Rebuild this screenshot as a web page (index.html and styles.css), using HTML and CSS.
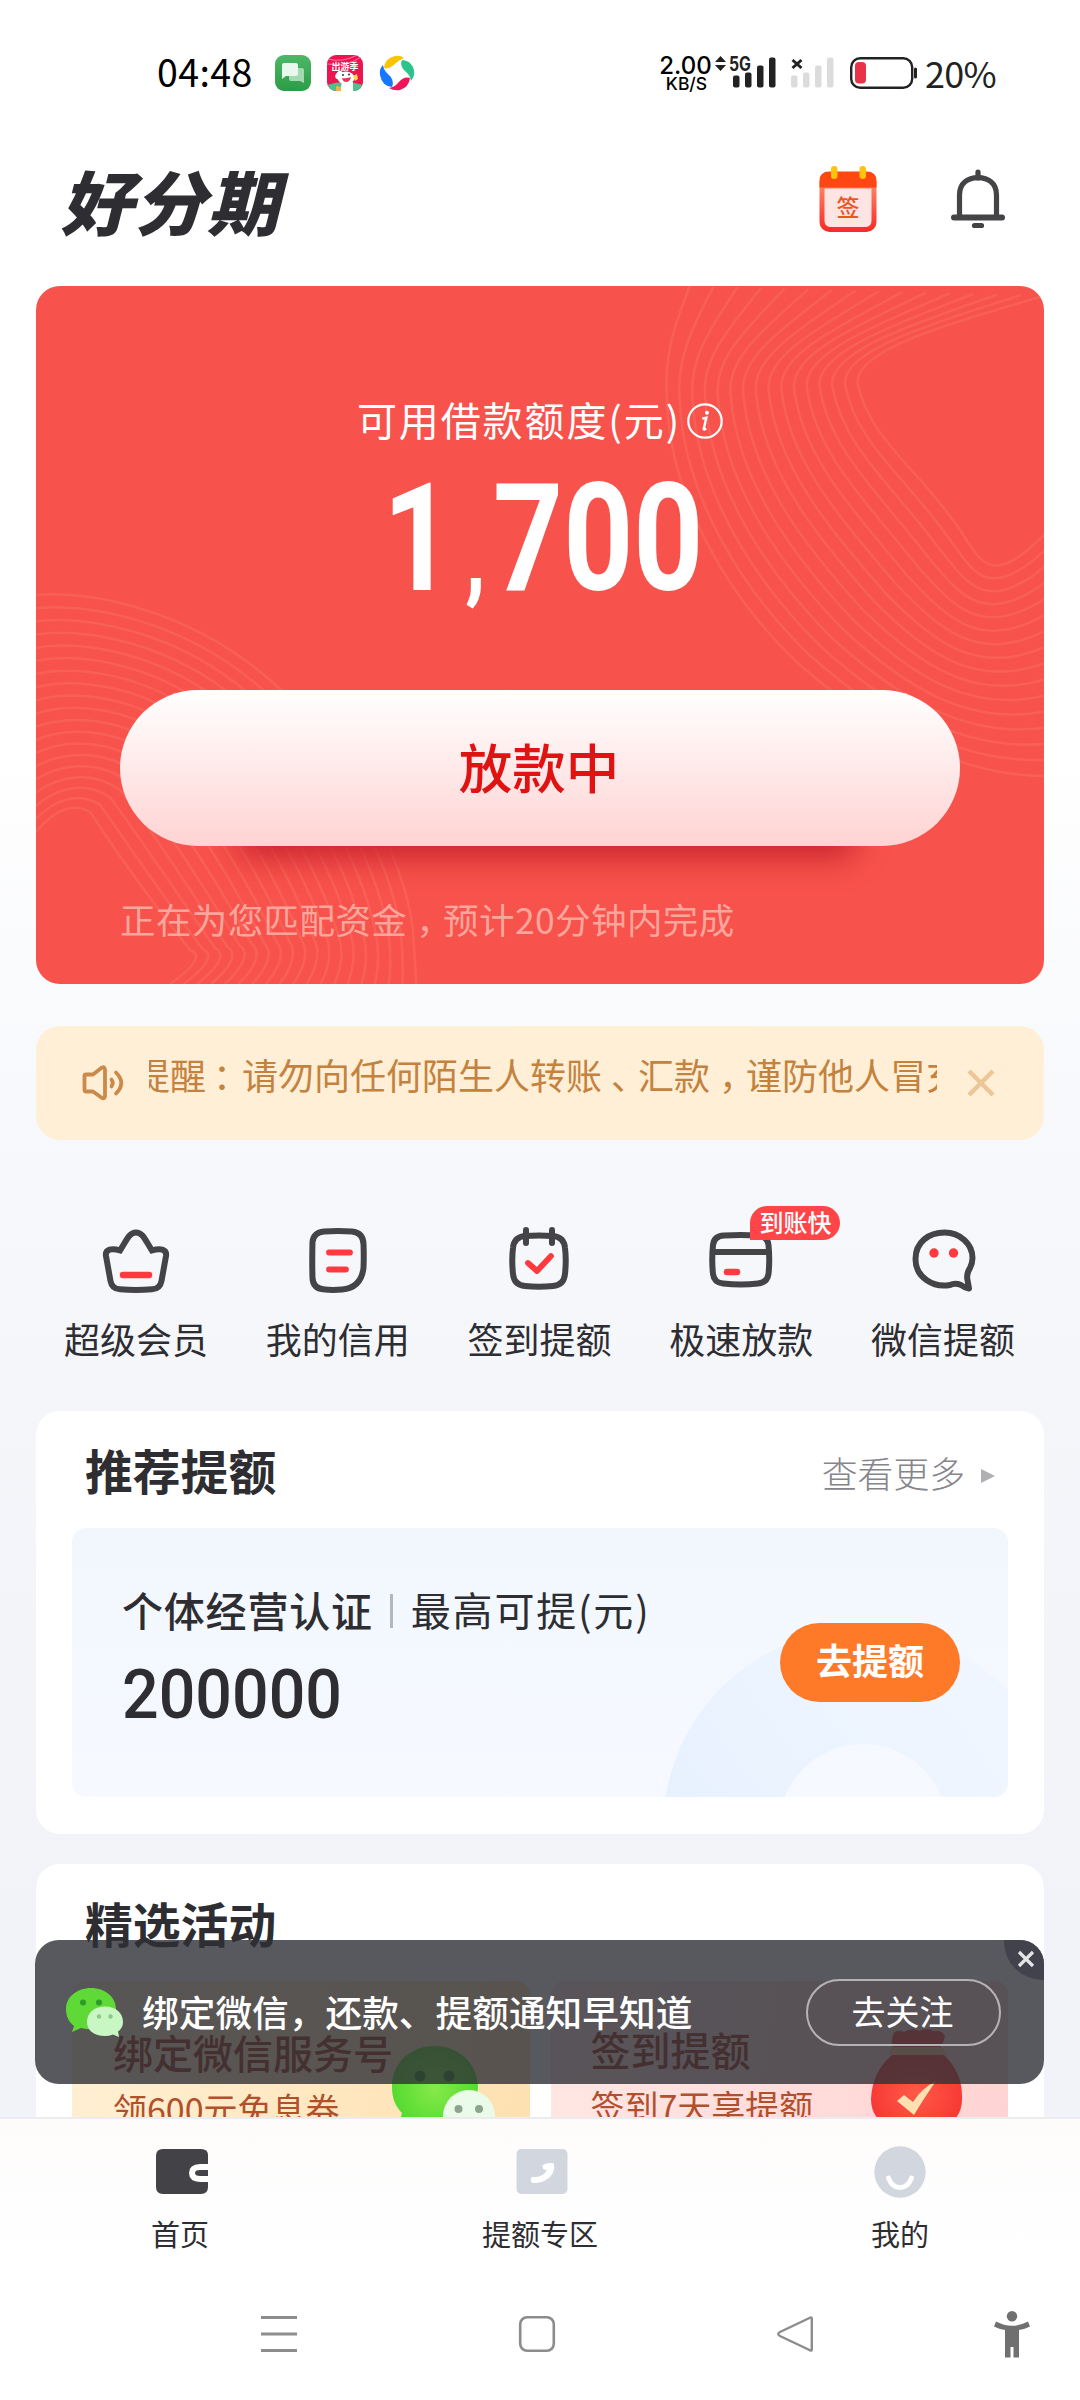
FILE: index.html
```html
<!DOCTYPE html>
<html lang="zh-CN">
<head>
<meta charset="utf-8">
<title>好分期</title>
<link rel="stylesheet" href="styles.css">
</head>
<body>
<div class="screen">
  <main class="content">
    <div class="status">
      <span class="time">04:48</span>
      <svg class="app-ic" viewBox="0 0 36 36"><defs><linearGradient id="gm" x1="0" y1="0" x2="0" y2="1"><stop offset="0" stop-color="#4db868"/><stop offset="1" stop-color="#2b9c46"/></linearGradient></defs><rect width="36" height="36" rx="9" fill="url(#gm)"/><path d="M14 13h13q2 0 2 2v13l-4-2H16q-2 0-2-2z" fill="#a5d9b1"/><path d="M9 8h12q2 0 2 2v9q0 2-2 2H11l-4 3V10q0-2 2-2z" fill="#e8f8ec"/></svg>
      <svg class="app-ic" viewBox="0 0 36 36"><defs><clipPath id="ac"><rect width="36" height="36" rx="9"/></clipPath></defs><g clip-path="url(#ac)"><rect width="36" height="36" fill="#ee1450"/><path d="M0 4Q16 8 30 0M0 9Q20 12 34 2" stroke="#ff7aa0" fill="none"/><path d="M0 30Q18 24 36 30V36H0z" fill="#4fc08a"/><path d="M15 27h11v9H13z" fill="#fff"/><path d="M9 31l5 1v4H9z" fill="#f7b23a"/><ellipse cx="19" cy="23" rx="8.500" ry="6.500" fill="#fff"/><ellipse cx="12" cy="20" rx="3" ry="4.500" fill="#fff" transform="rotate(40 12 20)"/><path d="M15 23q4 1 9-1q-1 5-5 5q-3 0-4-4z" fill="#e8384f"/><circle cx="16" cy="20" r="1" fill="#333"/><circle cx="22" cy="19.500" r="1" fill="#333"/><path d="M26 21l4-2 1 5-3 2z" fill="#ffd84a"/></g><text x="18" y="14.500" text-anchor="middle" class="app-txt">出游季</text></svg>
      <svg class="app-ic" viewBox="0 0 36 36"><path d="M5 13Q6 3 16 1Q21 0 25 3Q20 5 17 8Q10 15 5 13z" fill="#fbc400"/><path d="M23 5Q32 5 35 15Q36 21 32 26Q31 20 27 17Q20 11 23 5z" fill="#2bc48e"/><path d="M31 23Q30 32 21 35Q15 36 10 33Q16 32 19 28Q25 21 31 23z" fill="#f0145a"/><path d="M13 32Q3 31 1 20Q0 14 4 10Q5 16 9 19Q16 25 13 32z" fill="#1677ff"/></svg>
      <div class="speed"><b>2.00</b><span>KB/S</span></div>
      <svg class="signal" viewBox="0 0 130 34" fill="#222"><path d="M7.500 0l5.500 6H2zM7.500 15l5.500-6H2z"/><text x="16" y="14.500" class="sig-txt" textLength="22" lengthAdjust="spacingAndGlyphs">5G</text><rect x="20" y="19.500" width="6.500" height="12" rx="2"/><rect x="32" y="16.500" width="6.500" height="15" rx="2"/><rect x="44" y="9.500" width="6.500" height="22" rx="2"/><rect x="56" y="1.500" width="6.500" height="30" rx="2"/><path d="M79.500 4l9 8M88.500 4l-9 8" stroke="#222" stroke-width="3"/><g fill="#dcdcdc"><rect x="78" y="19.500" width="6.500" height="12" rx="2"/><rect x="90" y="16.500" width="6.500" height="15" rx="2"/><rect x="102" y="9.500" width="6.500" height="22" rx="2"/><rect x="114" y="1.500" width="6.500" height="30" rx="2"/></g></svg>
      <svg class="battery" viewBox="0 0 68 32"><rect x="1.200" y="1.200" width="61" height="29.500" rx="9" fill="#fff" stroke="#222" stroke-width="2.400"/><rect x="5" y="5" width="11" height="21.500" rx="4" fill="#e93147"/><rect x="64" y="10.500" width="3" height="11" rx="1.500" fill="#222"/></svg>
      <span class="pct">20%</span>
    </div>

    <header class="top">
      <h1 class="logo">好分期</h1>
      <svg class="sign" viewBox="0 0 58 66"><defs><linearGradient id="sg" x1="0" y1="0" x2="0" y2="1"><stop offset="0" stop-color="#ff9d77"/><stop offset="1" stop-color="#f82a24"/></linearGradient></defs><rect x="0.500" y="6" width="57" height="60" rx="10" fill="url(#sg)"/><path d="M.5 21.500V15q0-9.500 10-9.500h37q10 0 10 9.500v6.500z" fill="#ff4713"/><path d="M5.500 22.500h47v32q0 6.500-6 6.500h-35q-6 0-6-6.500z" fill="#ffe4e4"/><rect x="12" y="0" width="6.500" height="13" rx="3.200" fill="#ffc20e"/><rect x="40.500" y="0" width="6.500" height="13" rx="3.200" fill="#ffc20e"/><text x="29" y="49.500" text-anchor="middle" class="sign-txt">签</text></svg>
      <svg class="bell" viewBox="0 0 54 60" fill="none" stroke="#444447"><path d="M8.500 48V26C8.500 14 17 8.700 27 8.700S45.500 14 45.500 26V48" stroke-width="5.200"/><path d="M3 48.500H51" stroke-width="6" stroke-linecap="round"/><path d="M27 3V9M23.500 56.500h7" stroke-width="5.200" stroke-linecap="round"/></svg>
    </header>

    <section class="hero">
      <svg class="waves" viewBox="36 286 1008 698" id="waves"></svg>
      <div class="hero-title"><span>可用借款额度(元)</span><svg viewBox="0 0 36 36" fill="none" stroke="#fff"><circle cx="18" cy="18" r="16.700" stroke-width="2.200"/><circle cx="20" cy="9.700" r="2" fill="#fff" stroke="none"/><path d="M15.300 15.500l4-.7-2.600 11.400q0 1 2.600-.8" stroke-width="2.400"/></svg></div>
      <div class="amount"><span class="amount-in">1<i>,</i>700</span></div>
      <div class="cta">放款中</div>
      <p class="hint">正在为您匹配资金<i class="mid">，</i>预计20分钟内完成</p>
    </section>

    <section class="notice">
      <svg class="horn" viewBox="0 0 42 36" fill="none" stroke="#c98a4a" stroke-width="3.800" stroke-linecap="round" stroke-linejoin="round"><path d="M2.500 11Q2.500 9.500 4 9.500H11L20 2.500Q23 1.500 23 5V31Q23 34 20 33L11 26.500H4Q2.500 26.500 2.500 25z"/><path d="M29.500 14.500q2.500 3.500 0 7M34 7.500q10.500 10.500 0 21"/></svg>
      <div class="marquee"><div class="marquee-in">提醒<i class="mid2">：</i>请勿向任何陌生人转账<i class="mid">、</i>汇款<i class="mid">，</i>谨防他人冒充</div></div>
      <svg class="nx" viewBox="0 0 28 28"><path d="M2 2L26 26M26 2L2 26" stroke="#edc698" stroke-width="4.500"/></svg>
    </section>

    <nav class="quick">
      <div class="q"><svg viewBox="0 0 72 72" fill="none" stroke="#444447" stroke-width="6" stroke-linejoin="miter"><path d="M20 26.500C27 16 29 8.500 36 8.500S45 16 52 26.500C60 24 67 25 66 32L61.500 57Q60 65 52 65.300Q36 66.500 20 65.300Q12 65 10.500 57L6 32C5 25 12 24 20 26.500z"/><path d="M23 51H49" stroke="#ff3a3e" stroke-width="6.500" stroke-linecap="round"/></svg><span>超级会员</span></div>
      <div class="q"><svg viewBox="0 0 72 72" fill="none" stroke="#444447" stroke-width="6"><path d="M22 7.500Q36 6.500 50 7.500Q61 8.500 61.500 20Q62 32 61.500 44Q59 64 40 65.500Q30 66.500 21 65.300Q11 64 10.500 54Q10 36 10.500 18Q11.500 8.500 22 7.500z"/><path d="M27 28.500H48M27 45.500H44" stroke="#ff3a3e" stroke-width="5.800" stroke-linecap="round"/></svg><span>我的信用</span></div>
      <div class="q"><svg viewBox="0 0 72 72" fill="none" stroke="#444447" stroke-width="6" stroke-linecap="round"><path d="M22 12Q36 11 50 12Q61 13 62 24Q63.500 36 62 50Q61 61 50 62Q36 63.500 22 62Q11 61 10 50Q8.500 36 10 24Q11 13 22 12z"/><path d="M23 6V19M49 6V19"/><path d="M25 39L34 47L48 32" stroke="#ff3a3e" stroke-width="5.800" stroke-linejoin="round"/></svg><span>签到提额</span></div>
      <div class="q"><svg viewBox="0 0 72 72" fill="none" stroke="#444447" stroke-width="6"><path d="M19 11.500Q36 10.500 52 11.500Q62.500 12 63.500 21Q65 36 63.500 50Q62.500 58.500 53 59.500Q36 61.500 18 59.500Q9 58.500 8 50Q6.500 36 8 21Q9 12 19 11.500zM8 28H64"/><path d="M22 48H32" stroke="#ff3a3e" stroke-width="6.500" stroke-linecap="round"/></svg><span>极速放款</span><em>到账快</em></div>
      <div class="q"><svg class="bubble" viewBox="0 0 72 72" fill="none" stroke="#444447" stroke-width="6" stroke-linejoin="round"><path d="M61 64.500Q56 63.500 53 61Q47 58.500 42 61C26 64 7.500 54 7.500 35C7.500 18 21 8.500 36.500 8.500S64.500 20 64.500 34Q64.500 39 62 44Q58 50 59.500 56z"/><circle cx="26" cy="29" r="4.700" fill="#ff3a3e" stroke="none"/><circle cx="45.500" cy="29" r="4.700" fill="#ff3a3e" stroke="none"/></svg><span>微信提额</span></div>
    </nav>

    <section class="card rec">
      <div class="card-head"><h2>推荐提额</h2><span class="more">查看更多<svg viewBox="0 0 14 16"><path d="M0 1L14 8L0 15z" fill="#b0b0b4"/></svg></span></div>
      <div class="offer">
        <svg class="ring" viewBox="0 0 936 269"><defs><linearGradient id="rg" x1="0" y1="1" x2="1" y2="0.300"><stop offset="0" stop-color="#e6f0fe"/><stop offset="1" stop-color="#eff6ff"/></linearGradient></defs><circle cx="791" cy="301" r="142.500" fill="none" stroke="url(#rg)" stroke-width="115"/></svg>
        <div class="offer-info">
          <div class="offer-line"><b>个体经营认证</b><i></i><span>最高可提(元)</span></div>
          <div class="offer-num"><span>200000</span></div>
        </div>
        <div class="offer-btn">去提额</div>
      </div>
    </section>

    <section class="card acts">
      <div class="card-head"><h2>精选活动</h2></div>
      <div class="promos">
        <div class="promo p1"><h3>绑定微信服务号</h3><p>领600元免息券</p>
          <svg viewBox="0 0 110 100"><defs><radialGradient id="wg"><stop offset="0" stop-color="#86ea4a"/><stop offset="1" stop-color="#55da30"/></radialGradient></defs><path d="M46 5C20 5 3 23 3 46C3 58 7 66 13 72L8 90L28 81Q60 88 78 70Q89 60 89 46C89 23 70 5 46 5z" fill="url(#wg)"/><circle cx="31" cy="35" r="5.500" fill="#2f8c28"/><circle cx="60" cy="35" r="5.500" fill="#2f8c28"/><circle cx="80" cy="75" r="26" fill="#ebfbe9"/><circle cx="69.500" cy="68" r="4" fill="#8da58d"/><circle cx="90" cy="68" r="4" fill="#8da58d"/></svg></div>
        <div class="promo p2"><h3>签到提额</h3><p>签到7天享提额</p>
          <svg viewBox="0 0 110 100"><defs><radialGradient id="bg"><stop offset="0" stop-color="#ff5a48"/><stop offset="1" stop-color="#f73a35"/></radialGradient></defs><path d="M27 10Q24 2 28 -5Q32 -9 38 -6Q46 -11 53 -7Q62 -11 67 -7Q76 -8 79 -2Q78 4 74 10z" fill="#f2403a"/><path d="M26 9H76L80 17H22z" fill="#ffc78a"/><path d="M26 17H78Q97 35 96 61Q96 92 51 94Q5 92 5 61Q6 34 26 17z" fill="url(#bg)"/><path d="M31 63l7-6 9 7Q56 50 70 43Q60 57 48 77z" fill="#ffe0b0"/></svg></div>
      </div>
    </section>

    <aside class="toast">
      <svg class="wx" viewBox="0 0 57 49"><path d="M25 0C11 0 0 9 0 21C0 29 3 34 8 38L6 44L15 40Q30 44 40 36Q50 30 50 21C50 9 39 0 25 0z" fill="#5fd936"/><circle cx="17" cy="14.500" r="3" fill="#2f9a2a"/><circle cx="33" cy="14.500" r="3" fill="#2f9a2a"/><path d="M39 18.500C28 18.500 21 25 21 34C21 43 29 48 39 48Q43 48 47 46.500L53 49L52 43.500Q57 40 57 34C57 25 50 18.500 39 18.500z" fill="#c9f7c4"/><circle cx="33" cy="28.500" r="2.200" fill="#8cc887"/><circle cx="44.500" cy="28.500" r="2.200" fill="#8cc887"/></svg>
      <span class="toast-txt">绑定微信，还款、提额通知早知道</span>
      <span class="toast-btn">去关注</span>
      <span class="toast-x"><svg viewBox="0 0 16 16"><path d="M1 1L15 15M15 1L1 15" stroke="#e4e4e6" stroke-width="3.200"/></svg></span>
    </aside>
  </main>

  <nav class="tabs">
    <div class="tab"><svg class="wallet" viewBox="0 0 52 52"><path d="M7 3H45Q52 3 52 9V18H44Q33 18.500 33 27T44 36H52V41Q52 48 45 48H7Q0 48 0 41V10Q0 3 7 3z" fill="#424247"/><path d="M52 24H44Q39 24 39 27T44 30H52z" fill="#424247"/></svg><span>首页</span></div>
    <div class="tab"><svg class="phone" viewBox="0 0 52 52"><rect x="0.500" y="3" width="51" height="45" rx="5" fill="#d2d7df"/><path d="M26.500 19.500Q31 16 38 17.500Q40 28 30 34Q23 38.500 15.500 36.500Q14 33.500 15.500 31Q27 32 31 24Q26 24 26.500 19.500z" fill="#fff"/></svg><span>提额专区</span></div>
    <div class="tab"><svg viewBox="0 0 52 52"><circle cx="26" cy="26" r="25.700" fill="#d2d7df"/><path d="M14.500 32Q18 41.500 26 41.500T37.500 32" fill="none" stroke="#fff" stroke-width="5" stroke-linecap="round"/></svg><span>我的</span></div>
  </nav>
  <div class="sysnav">
    <svg viewBox="0 0 36 36" stroke="#8c8c8c" stroke-width="3"><path d="M0 1.500H36M0 18H36M0 34.500H36"/></svg>
    <svg viewBox="0 0 36 36"><rect x="1.200" y="1.200" width="33.600" height="33.600" rx="7" fill="none" stroke="#8c8c8c" stroke-width="2.600"/></svg>
    <svg viewBox="0 0 36 36"><path d="M33.500 1.500Q34.800 1 34.800 3V33Q34.800 35 33.500 34.500L3 20Q-.5 18 3 16z" fill="none" stroke="#8c8c8c" stroke-width="2.400"/></svg>
    <svg class="man" viewBox="0 0 36 48"><circle cx="18" cy="5.200" r="5.200" fill="#707070"/><path d="M2 10.500Q18 19 34 10.500L36 15.500Q30 18.500 25 19V46.500H19.500V36H16.500V46.500H11V19Q6 18.500 0 15.500z" fill="#707070"/></svg>
  </div>
</div>
<script src="waves.js"></script>
</body>
</html>
```

FILE: waves.js
```js
// Draws the contour lines of the hero card by blending an outer curve into an inner one.
const groups = [
  { outer: [690,286, 672,330, 664,360, 667,400, 670,500, 730,600, 800,665, 880,735, 960,775, 1044,776],
    inner: [1044,296, 960,320, 850,350, 858,385, 870,440, 920,470, 960,530, 980,560, 990,590, 1044,535], n: 16 },
  { outer: [36,595, 90,590, 190,610, 270,680, 350,750, 405,860, 413,930, 414,950, 416,970, 416,984],
    inner: [36,832, 50,815, 70,800, 90,812, 115,850, 150,900, 190,950, 205,955, 190,970, 170,984], n: 19 }
];
const svg = document.getElementById('waves');
groups.forEach(g => {
  for (let k = 0; k < g.n; k++) {
    const t = k / (g.n - 1);
    const p = g.outer.map((v, i) => (v + (g.inner[i] - v) * t).toFixed(1));
    const path = document.createElementNS('http://www.w3.org/2000/svg', 'path');
    path.setAttribute('d', `M${p[0]} ${p[1]}C${p.slice(2).join(' ')}`);
    svg.appendChild(path);
  }
});
```

FILE: styles.css
```css
* { box-sizing: border-box; margin: 0; padding: 0; }
body { font-family: "Noto Sans CJK SC", sans-serif; color: #2d2d32; background: #fff; }
i, em { font-style: normal; }
svg { display: block; flex: none; overflow: visible; }

.screen { width: 1080px; height: 2400px; display: flex; flex-direction: column; overflow: hidden; background: #fff; }
.content { position: relative; height: 2117px; flex: none; overflow: hidden; padding: 0 36px; background: linear-gradient(#fff 0, #fff 750px, #f8f9fc 1080px, #f5f6fa 1400px, #f2f3f8 1900px); }

.status { height: 146px; display: flex; align-items: center; padding: 0 0 0 121px; color: #000; }
.time { width: 118px; font-size: 37.500px; line-height: 40px; letter-spacing: .4px; margin-top: -5px; }
.app-ic { width: 36px; height: 36px; margin-right: 16px; }
.app-txt { font-size: 9px; font-weight: 700; fill: #fff; }
.speed { width: 53px; margin: 2px 0 0 228px; display: flex; flex-direction: column; align-items: center; }
.speed b { font: 500 24px/20px Inter, sans-serif; }
.speed span { font: 500 17.500px/16px Inter, sans-serif; padding-left: 2px; }
.signal { width: 130px; height: 34px; margin-left: 1px; }
.sig-txt { font: 700 19.500px Inter, sans-serif; }
.battery { width: 68px; height: 32px; margin-left: 7px; }
.pct { margin: -3px 0 0 7px; font-size: 36px; line-height: 40px; color: #222; letter-spacing: -.7px; }

.top { height: 140px; display: flex; align-items: flex-start; padding: 20px 39px 0 24px; }
.logo { flex: 1; height: 66px; font-size: 72px; line-height: 66px; font-weight: 900; color: #2e2e32; transform: skewX(-14deg) scaleY(.97); transform-origin: 0 100%; letter-spacing: 1.200px; }
.sign { width: 58px; height: 66px; margin-right: 74px; }
.sign-txt { font-size: 23px; font-weight: 500; fill: #f0541e; }
.bell { width: 54px; height: 60px; margin-top: 3px; }

.hero { position: relative; isolation: isolate; height: 698px; border-radius: 24px; overflow: hidden; background: #f7524b; color: #fff; padding: 110px 84px 0; }
.waves { position: absolute; z-index: -2; left: 0; top: 0; width: 1008px; height: 698px; fill: none; stroke: rgba(255, 160, 140, .19); stroke-width: 2.500; }
.hero-title { height: 50px; display: flex; align-items: center; justify-content: center; font-size: 40px; letter-spacing: 1.900px; }
.hero-title span { line-height: 50px; margin-top: -5px; }
.hero-title svg { width: 36px; height: 36px; margin-left: 6px; }
.amount { height: 244px; display: flex; justify-content: center; padding: 3px 0 0 7px; }
.amount-in { font: 700 151px/180px Roboto, sans-serif; transform: scaleX(.81); }
.amount-in i { font-size: 104px; margin: 0 9px 0 15px; }
.cta { position: relative; height: 156px; border-radius: 78px; background: linear-gradient(#fff, #fff0f0 35%, #ffd3d3); color: #e01212; font-size: 53.500px; font-weight: 500; line-height: 152px; padding-right: 2px; text-align: center; }
.cta::after { content: ""; position: absolute; z-index: -1; left: 116px; right: 104px; bottom: 4px; height: 40px; border-radius: 20px; box-shadow: 0 14px 30px 2px #cb2630; }
.hint { padding-top: 46px; font-size: 35.500px; line-height: 54px; color: #fba59c; letter-spacing: .4px; }
.mid, .mid2 { display: inline-block; transform: translateX(9px); }
.mid2 { transform: translateX(7px); }

.notice { height: 114px; margin-top: 42px; border-radius: 24px; background: #ffefd6; display: flex; align-items: center; padding: 0 49px 0 46px; }
.horn { width: 42px; height: 36px; }
.marquee { width: 788px; margin-left: 25px; overflow: hidden; height: 60px; margin-top: -14px; }
.marquee-in { margin-left: -15px; white-space: nowrap; font-size: 36px; line-height: 56px; color: #c4823f; }
.nx { width: 28px; height: 28px; margin-left: 30px; }

.quick { height: 271px; display: grid; grid-template-columns: repeat(5, 1fr); padding-top: 84px; margin: 0 0 0 -1px; }
.q { position: relative; display: flex; flex-direction: column; align-items: center; }
.q svg { width: 72px; height: 72px; }
.q .bubble { margin-left: 2px; }
.q span { margin-top: 15px; font-size: 36px; line-height: 54px; }
.q em { position: absolute; left: 110px; top: -18px; width: 90px; height: 34px; border-radius: 17px 17px 17px 0; background: #ff4548; color: #fff; font-size: 24px; font-weight: 500; line-height: 32px; text-align: center; }

.card { background: #fff; border-radius: 24px; padding: 0 36px; }
.card-head { height: 117px; display: flex; justify-content: space-between; padding: 0 13px; }
.card-head h2 { font-size: 47.800px; font-weight: 700; line-height: 118px; }
.more { display: flex; align-items: center; gap: 16px; font-size: 35.800px; font-weight: 300; color: #85858b; line-height: 54px; height: 122px; }
.more svg { width: 14px; height: 16px; margin-top: 8px; }
.rec { height: 423px; }
.offer { position: relative; height: 269px; border-radius: 14px; overflow: hidden; background: linear-gradient(#f2f7fe, #f6f9ff); display: flex; align-items: center; justify-content: space-between; padding: 0 48px 0 50px; }
.ring { position: absolute; left: 0; top: 0; width: 936px; height: 269px; }
.offer-info { position: relative; align-self: flex-start; padding-top: 53px; }
.offer-line { display: flex; align-items: center; height: 56px; font-size: 41px; letter-spacing: .8px; }
.offer-line b { font-weight: 500; }
.offer-line i { width: 3px; height: 34px; margin: 3px 18px 0 17px; background: #b4b6bc; }
.offer-line span { font-size: 40px; letter-spacing: 1.800px; }
.offer-num { height: 90px; padding-top: 13px; font: 500 69px/90px Roboto, sans-serif; }
.offer-num span { display: inline-block; transform: scaleX(.935); transform-origin: 0 50%; }
.offer-btn { position: relative; width: 180px; height: 79px; border-radius: 40px; background: #ff7a28; color: #fff; font-size: 36px; font-weight: 700; line-height: 72px; text-align: center; }

.acts { margin-top: 30px; height: 400px; }
.promos { display: grid; grid-template-columns: 1fr 1fr; gap: 21px; }
.promo { position: relative; height: 200px; border-radius: 14px; padding: 41px 41px 0; overflow: hidden; }
.p1 { background: linear-gradient(100deg, #fff0d4, #fee0b0); }
.p2 { background: linear-gradient(100deg, #ffe7e4, #ffd3d3); }
.promo h3 { font-size: 40px; line-height: 60px; font-weight: 500; color: #99331c; }
.promo p { font-size: 34px; line-height: 54px; color: #b2502c; white-space: nowrap; }
.promo svg { position: absolute; left: 317px; top: 60px; width: 110px; height: 100px; }
.p2 { padding: 38px 40px 0; }
.p2 svg { left: 315px; top: 57px; }

.toast { position: absolute; left: 35px; top: 1940px; width: 1009px; height: 144px; border-radius: 24px; overflow: hidden; background: rgba(46, 47, 54, .8); display: flex; align-items: center; padding: 0 43px 0 31px; color: #fff; }
.wx { width: 57px; height: 49px; }
.toast-txt { flex: 1; margin: 0 0 2px 19px; font-size: 36.700px; font-weight: 500; line-height: 54px; }
.toast-btn { width: 195px; height: 67px; border: 2px solid #b4b4b8; border-radius: 34px; font-size: 34px; line-height: 60px; padding-right: 2px; text-align: center; }
.toast-x { position: absolute; right: -38px; top: -36px; width: 78px; height: 76px; border-radius: 50%; background: #41424b; }
.toast-x svg { position: absolute; left: 14px; top: 47px; width: 16px; height: 16px; }

.tabs { height: 153px; flex: none; border-top: 2px solid #ececf0; display: grid; grid-template-columns: repeat(3, 1fr); background: linear-gradient(#fefcfb, #fefefe 60%, #fff); }
.tab { display: flex; flex-direction: column; align-items: center; padding-top: 27px; }
.tab svg { width: 52px; height: 52px; }
.tab .wallet, .tab .phone { margin-left: 3px; }
.tab span { margin-top: 13px; font-size: 29px; line-height: 44px; }

.sysnav { height: 130px; position: relative; display: grid; grid-template-columns: 36px 36px 36px 36px; column-gap: 222px; padding: 46px 0 0 261px; }
.sysnav svg { width: 36px; height: 36px; }
.sysnav .man { height: 48px; margin: -5px 0 0 -41px; }
```
